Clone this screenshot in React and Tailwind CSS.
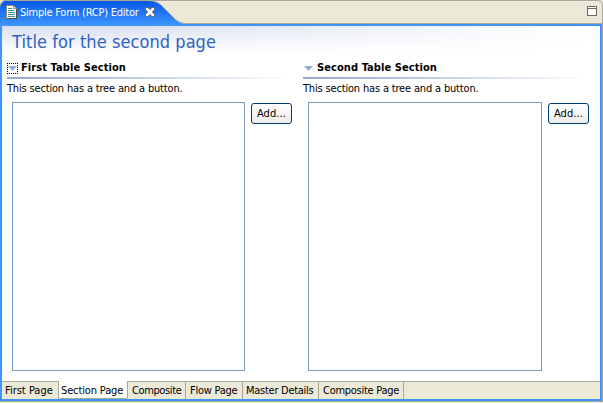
function FileIcon() {
  return (
    <svg width="11" height="14" viewBox="0 0 11 14" shapeRendering="crispEdges" className="block shrink-0">
      <path d="M0.5 0.5H7.5L10.5 3.5V13.5H0.5Z" fill="#fff" stroke="#8b8a6a" />
      <path d="M10.5 4V13.5H1" fill="none" stroke="#4d4c3a" />
      <path d="M7.5 1V3.5H10" fill="none" stroke="#a7a27c" />
      <path d="M2 3.5H6M2 5.5H8M2 7.5H9M2 9.5H9M2 11.5H9" stroke="#3f979b" />
    </svg>
  );
}

function CloseIcon() {
  return (
    <svg width="10" height="10" viewBox="0 0 10 10" className="block shrink-0">
      <path d="M0.5 0.5H3L5 2.6L7 0.5H9.5V2.5L7.4 5L9.5 7.5V9.5H7L5 7.4L3 9.5H0.5V7.5L2.6 5L0.5 2.5Z" fill="#fff" stroke="#5b6068" strokeWidth="0.9" />
    </svg>
  );
}

function EditorTab() {
  return (
    <div className="relative h-6 w-[190px]">
      <svg width="190" height="24" viewBox="0 0 190 24" className="absolute left-0 top-0">
        <defs>
          <linearGradient id="tabFill" x1="0" y1="0" x2="0" y2="1">
            <stop offset="0" stopColor="#0556e6" />
            <stop offset="1" stopColor="#3a92fd" />
          </linearGradient>
        </defs>
        <path d="M0 24V5L1 3L3 1L5 0H150C155 1 158 3 161 5L174 18C177 21 180 23 186 24Z" fill="url(#tabFill)" />
        <path d="M0.5 6V4.5L4.5 0.5H149C155 1 158 2.5 161 5L174 18C177 21 180 23.5 186 23.5H190M149 0.5H190" fill="none" stroke="#aca899" />
      </svg>
      <div className="relative flex h-6 items-center pl-1.5">
        <FileIcon />
        <span className="ml-[3px] mt-[3px] w-[125px] text-[11px] tracking-[-0.24px] text-white">Simple Form (RCP) Editor</span>
        <CloseIcon />
      </div>
    </div>
  );
}

function Section({ title, focused }) {
  return (
    <section className="w-[287px]">
      <div className="flex h-[14px] items-center">
        <div className={focused ? "flex h-[11px] w-[11px] items-center justify-center border border-dotted border-black" : "flex h-[11px] w-[11px] items-center justify-center"}>
          <svg width="9" height="5" viewBox="0 0 9 5" className="block shrink-0">
            <path d="M0 0H9L5 4.5H4Z" fill="#93a9d3" />
          </svg>
        </div>
        <h2 className="ml-[3px] text-[11px] font-bold tracking-[0.08px] text-black">{title}</h2>
      </div>
      <div className="mt-[2px] h-[2px] bg-linear-to-r from-[#91a7d2] to-white" />
      <p className="mt-[2px] h-4 text-[11px] leading-4 tracking-[-0.17px] text-black">This section has a tree and a button.</p>
      <div className="mt-[5px] flex items-start pl-[5px]">
        <div className={focused ? "h-[269px] w-[233px] border border-[#7f9db9] bg-white" : "h-[269px] w-[234px] border border-[#7f9db9] bg-white"} />
        <button className="ml-[6px] mt-px h-[21px] w-[41px] rounded-[3px] border border-[#003c74] bg-linear-to-b from-white to-[#ecebe6] pt-px text-[11px] leading-[18px] tracking-[0.1px] text-black">
          Add...
        </button>
      </div>
    </section>
  );
}

const pages = [
  { name: "First Page", style: "w-[57px] pl-[3px] border-r tracking-[0px]" },
  { name: "Section Page", style: "w-[69px] pl-[2px] h-[18px] -mt-px pt-px bg-white border-r border-b rounded-b-[2px] tracking-[-0.14px]" },
  { name: "Composite", style: "w-[58px] pl-[4px] border-r tracking-[-0.38px]" },
  { name: "Flow Page", style: "w-[57px] pl-[4px] border-r tracking-[-0.25px]" },
  { name: "Master Details", style: "w-[76px] pl-[3px] border-r tracking-[-0.27px]" },
  { name: "Composite Page", style: "w-[85px] pl-[4px] border-r tracking-[-0.27px]" },
];

export default function App() {
  return (
    <div className="h-[403px] w-[603px] overflow-hidden bg-[#ece9d8] font-['DejaVu_Sans_Condensed','DejaVu_Sans',sans-serif] [font-stretch:condensed] whitespace-nowrap">
      <div className="flex h-[402px] flex-col rounded-t-[5px] border-r border-b border-[#aca899]">
        <header className="flex h-6 shrink-0">
          <EditorTab />
          <div className="flex flex-1 justify-end rounded-tr-[5px] border-y border-[#aca899] pr-[5px] pt-[5px]">
            <svg width="10" height="10" viewBox="0 0 10 10" shapeRendering="crispEdges">
              <path d="M0.5 0.5H9.5V9.5H0.5ZM0.5 2.5H9.5" fill="#fff" stroke="#6c6a5a" />
            </svg>
          </div>
        </header>
        <main className="flex flex-1 flex-col border-2 border-[#3d95ff] bg-white">
          <div className="relative h-[35px]">
            <div className="absolute inset-0 bg-linear-to-r from-[#d9dff0] from-20% to-white [mask-image:linear-gradient(to_bottom,black,transparent_75%)]" />
            <h1 className="relative pl-[10px] text-[18px] leading-[31px] tracking-[0.07px] text-[#2f62c2]">Title for the second page</h1>
          </div>
          <div className="flex gap-[9px] pl-[5px]">
            <Section title="First Table Section" focused />
            <Section title="Second Table Section" />
          </div>
          <nav className="mt-auto flex h-[18px] border-t border-[#aca899] bg-[#ece9d8]">
            {pages.map((page) => (
              <div key={page.name} className={"border-[#aca899] text-[11px] leading-[17px] " + page.style}>
                {page.name}
              </div>
            ))}
          </nav>
        </main>
      </div>
    </div>
  );
}
